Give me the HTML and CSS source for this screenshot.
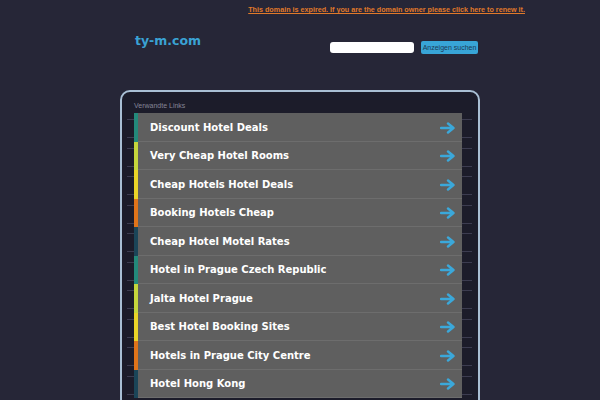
FILE: index.html
```html
<!DOCTYPE html>
<html lang="de">
<head>
<meta charset="utf-8">
<title>ty-m.com</title>
<link rel="stylesheet" href="styles.css">
</head>
<body>
<div class="topbar"><a href="#">This domain is expired. If you are the domain owner please click here to renew it.</a></div>
<div class="page">
  <header class="header">
    <div class="logo">ty-m.com</div>
    <form class="search">
      <input class="search-input" type="text">
      <button class="search-btn" type="button">Anzeigen suchen</button>
    </form>
  </header>
  <section class="box">
    <div class="label">Verwandte Links</div>
    <ul class="list">
      <li class="row"><a class="item c-teal" href="#"><span class="text">Discount Hotel Deals</span><svg class="arrow" viewBox="0 0 16 12"><path d="M1 6H13M8 1.5L13.5 6L8 10.5"/></svg></a></li>
      <li class="row"><a class="item c-lime" href="#"><span class="text">Very Cheap Hotel Rooms</span><svg class="arrow" viewBox="0 0 16 12"><path d="M1 6H13M8 1.5L13.5 6L8 10.5"/></svg></a></li>
      <li class="row"><a class="item c-yellow" href="#"><span class="text">Cheap Hotels Hotel Deals</span><svg class="arrow" viewBox="0 0 16 12"><path d="M1 6H13M8 1.5L13.5 6L8 10.5"/></svg></a></li>
      <li class="row"><a class="item c-orange" href="#"><span class="text">Booking Hotels Cheap</span><svg class="arrow" viewBox="0 0 16 12"><path d="M1 6H13M8 1.5L13.5 6L8 10.5"/></svg></a></li>
      <li class="row"><a class="item c-navy" href="#"><span class="text">Cheap Hotel Motel Rates</span><svg class="arrow" viewBox="0 0 16 12"><path d="M1 6H13M8 1.5L13.5 6L8 10.5"/></svg></a></li>
      <li class="row"><a class="item c-teal" href="#"><span class="text">Hotel in Prague Czech Republic</span><svg class="arrow" viewBox="0 0 16 12"><path d="M1 6H13M8 1.5L13.5 6L8 10.5"/></svg></a></li>
      <li class="row"><a class="item c-lime" href="#"><span class="text">Jalta Hotel Prague</span><svg class="arrow" viewBox="0 0 16 12"><path d="M1 6H13M8 1.5L13.5 6L8 10.5"/></svg></a></li>
      <li class="row"><a class="item c-yellow" href="#"><span class="text">Best Hotel Booking Sites</span><svg class="arrow" viewBox="0 0 16 12"><path d="M1 6H13M8 1.5L13.5 6L8 10.5"/></svg></a></li>
      <li class="row"><a class="item c-orange" href="#"><span class="text">Hotels in Prague City Centre</span><svg class="arrow" viewBox="0 0 16 12"><path d="M1 6H13M8 1.5L13.5 6L8 10.5"/></svg></a></li>
      <li class="row"><a class="item c-navy" href="#"><span class="text">Hotel Hong Kong</span><svg class="arrow" viewBox="0 0 16 12"><path d="M1 6H13M8 1.5L13.5 6L8 10.5"/></svg></a></li>
    </ul>
  </section>
</div>
</body>
</html>
```
FILE: styles.css
```css
html, body {
  margin: 0;
  padding: 0;
  background: #262637;
  height: 400px;
  overflow: hidden;
}
body {
  font-family: "Liberation Sans", Arial, sans-serif;
}
.topbar {
  display: flex;
  justify-content: flex-end;
  padding: 5px 75px 0 0;
  height: 10px;
}
.topbar a {
  color: #e0792a;
  font-size: 7.2px;
  font-weight: bold;
  line-height: 9px;
  text-decoration: underline;
}
.page {
  width: 360px;
  margin: 0 0 0 120px;
}
.header {
  display: flex;
  align-items: flex-start;
  padding: 0 2px 0 15px;
  height: 75px;
}
.logo {
  margin-top: 17px;
  font-family: "DejaVu Sans", sans-serif;
  font-weight: bold;
  font-size: 12.5px;
  line-height: 18px;
  color: #3aa2d4;
}
.search {
  margin: 26px 0 0 auto;
  display: flex;
  gap: 7px;
  align-items: center;
}
.search-input {
  box-sizing: border-box;
  width: 84px;
  height: 11px;
  border: none;
  border-radius: 3px;
  background: #fff;
  padding: 0;
}
.search-btn {
  box-sizing: border-box;
  width: 57px;
  height: 13px;
  border: none;
  border-radius: 2px;
  background: #38a5d7;
  color: #1d3a55;
  font-family: "Liberation Sans", Arial, sans-serif;
  font-size: 7px;
  padding: 0;
  line-height: 13px;
}
.box {
  box-sizing: border-box;
  width: 360px;
  height: 340px;
  border: 2px solid #a9bfd4;
  border-radius: 10px;
  background: #1c1c2a;
  padding: 9px 6px 0 5px;
}
.label {
  color: #858596;
  font-size: 7px;
  line-height: 10px;
  padding-left: 7px;
  height: 12px;
}
.list {
  list-style: none;
  margin: 0;
  padding: 0;
}
.row {
  height: 28.5px;
  background:
    linear-gradient(#3c3c50, #3c3c50) 0 6px / 100% 1px no-repeat,
    linear-gradient(#3c3c50, #3c3c50) 0 24px / 100% 1px no-repeat;
}
.item {
  box-sizing: border-box;
  display: flex;
  align-items: center;
  margin-left: 7px;
  width: 328px;
  height: 28.5px;
  border-left: 4px solid;
  background: #5f5f5f;
  box-shadow: inset 0 -1px 0 #6d6d6d;
  padding: 1px 6px 0 12px;
  text-decoration: none;
}
.text {
  flex: 1;
  color: #fff;
  font-family: "DejaVu Sans", sans-serif;
  font-weight: bold;
  font-size: 10px;
  line-height: 14px;
}
.arrow {
  width: 16px;
  height: 12px;
  fill: none;
  stroke: #3ba8da;
  stroke-width: 2.4;
  stroke-linecap: round;
  stroke-linejoin: round;
}
.c-teal { border-left-color: #23897a; }
.c-lime { border-left-color: #c5d63c; }
.c-yellow { border-left-color: #ead428; }
.c-orange { border-left-color: #e0741a; }
.c-navy { border-left-color: #1b4558; }
```
